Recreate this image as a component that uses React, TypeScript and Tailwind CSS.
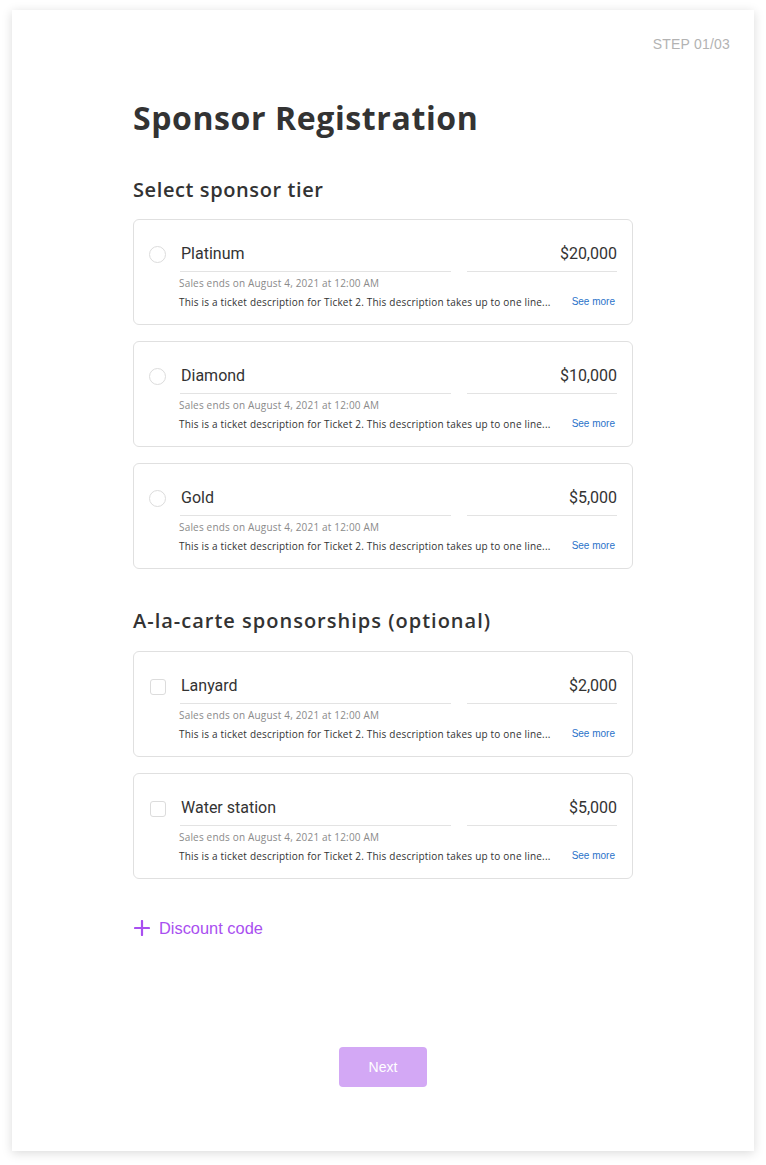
import React from "react";

type Item = { name: string; price: string };

const tiers: Item[] = [
  { name: "Platinum", price: "$20,000" },
  { name: "Diamond", price: "$10,000" },
  { name: "Gold", price: "$5,000" },
];

const extras: Item[] = [
  { name: "Lanyard", price: "$2,000" },
  { name: "Water station", price: "$5,000" },
];

const POP = "font-['Open_Sans',sans-serif]";

function TicketCard({ item, kind }: { item: Item; kind: "radio" | "check" }) {
  return (
    <div className="w-[500px] h-[106px] rounded-[6px] border border-[#e0e0e0] bg-white flex">
      <div className="w-[46px] flex justify-end pt-[26px] pr-[14px]">
        {kind === "radio" ? (
          <div className="w-[17px] h-[17px] rounded-full border border-[#dcdcdc]" />
        ) : (
          <div className="w-[16px] h-[16px] mt-[1px] rounded-[3px] border border-[#dcdcdc]" />
        )}
      </div>
      <div className="flex-1 pr-[15px]">
        <div className="flex gap-[16px] pt-[22px]">
          <div className="w-[271px] h-[30px] border-b border-[#e3e3e3] pl-[1px] font-['Roboto',sans-serif] text-[16px] leading-[24px] text-[#333]">
            {item.name}
          </div>
          <div className="flex-1 h-[30px] border-b border-[#e3e3e3] text-right font-['Roboto',sans-serif] text-[16px] leading-[24px] text-[#333]">
            {item.price}
          </div>
        </div>
        <div className={`${POP} text-[10px] leading-[14px] tracking-[0.18px] text-[#8a8a8a] mt-[4px] -ml-[1px]`}>
          Sales ends on August 4, 2021 at 12:00 AM
        </div>
        <div className="flex justify-between items-center mt-[5px] -ml-[1px]">
          <span className={`${POP} text-[10px] leading-[14px] tracking-[0.2px] text-[#333]`}>
            This is a ticket description for Ticket 2. This description takes up to one line...
          </span>
          <span className="font-['Liberation_Sans',sans-serif] text-[10px] leading-[14px] text-[#2a72c9] pr-[2px]">
            See more
          </span>
        </div>
      </div>
    </div>
  );
}

export default function App() {
  return (
    <div className="min-h-[1165px] bg-white pt-[10px] px-[12px] pb-[14px]">
      <div className="w-[742px] h-[1141px] bg-white shadow-[0_2px_10px_rgba(0,0,0,0.15)] flex flex-col">
        <div className="flex justify-end pt-[24px] pr-[24px] font-['Liberation_Sans',sans-serif] text-[14px] leading-[20px] tracking-[0.2px] text-[#b3b3b3]">
          STEP 01/03
        </div>
        <div className="pl-[121px] flex flex-col">
          <h1 className={`${POP} font-bold text-[32px] leading-[40px] text-[#333] mt-[44px] tracking-[0.6px]`}>
            Sponsor Registration
          </h1>
          <h2 className={`${POP} font-semibold text-[20px] leading-[28px] text-[#333] mt-[38px] tracking-[0.6px]`}>
            Select sponsor tier
          </h2>
          <div className="flex flex-col gap-[16px] mt-[15px]">
            {tiers.map((t) => (
              <TicketCard key={t.name} item={t} kind="radio" />
            ))}
          </div>
          <h2 className={`${POP} font-semibold text-[20px] leading-[28px] text-[#333] mt-[38px] tracking-[1px]`}>
            A-la-carte sponsorships (optional)
          </h2>
          <div className="flex flex-col gap-[16px] mt-[16px]">
            {extras.map((t) => (
              <TicketCard key={t.name} item={t} kind="check" />
            ))}
          </div>
          <div className="flex items-center gap-[9px] mt-[39px] text-[#a94ff0]">
            <svg width="16" height="16" viewBox="0 0 16 16" className="ml-[1px]">
              <path d="M8 1v14M1 8h14" stroke="currentColor" strokeWidth="2.2" strokeLinecap="round" />
            </svg>
            <span className="font-['Liberation_Sans',sans-serif] text-[16.4px] leading-[20px]">Discount code</span>
          </div>
        </div>
        <div className="flex justify-center mt-[109px]">
          <button className="w-[88px] h-[40px] rounded-[4px] bg-[#d3a8f5] text-white font-['Liberation_Sans',sans-serif] text-[14px]">
            Next
          </button>
        </div>
      </div>
    </div>
  );
}
